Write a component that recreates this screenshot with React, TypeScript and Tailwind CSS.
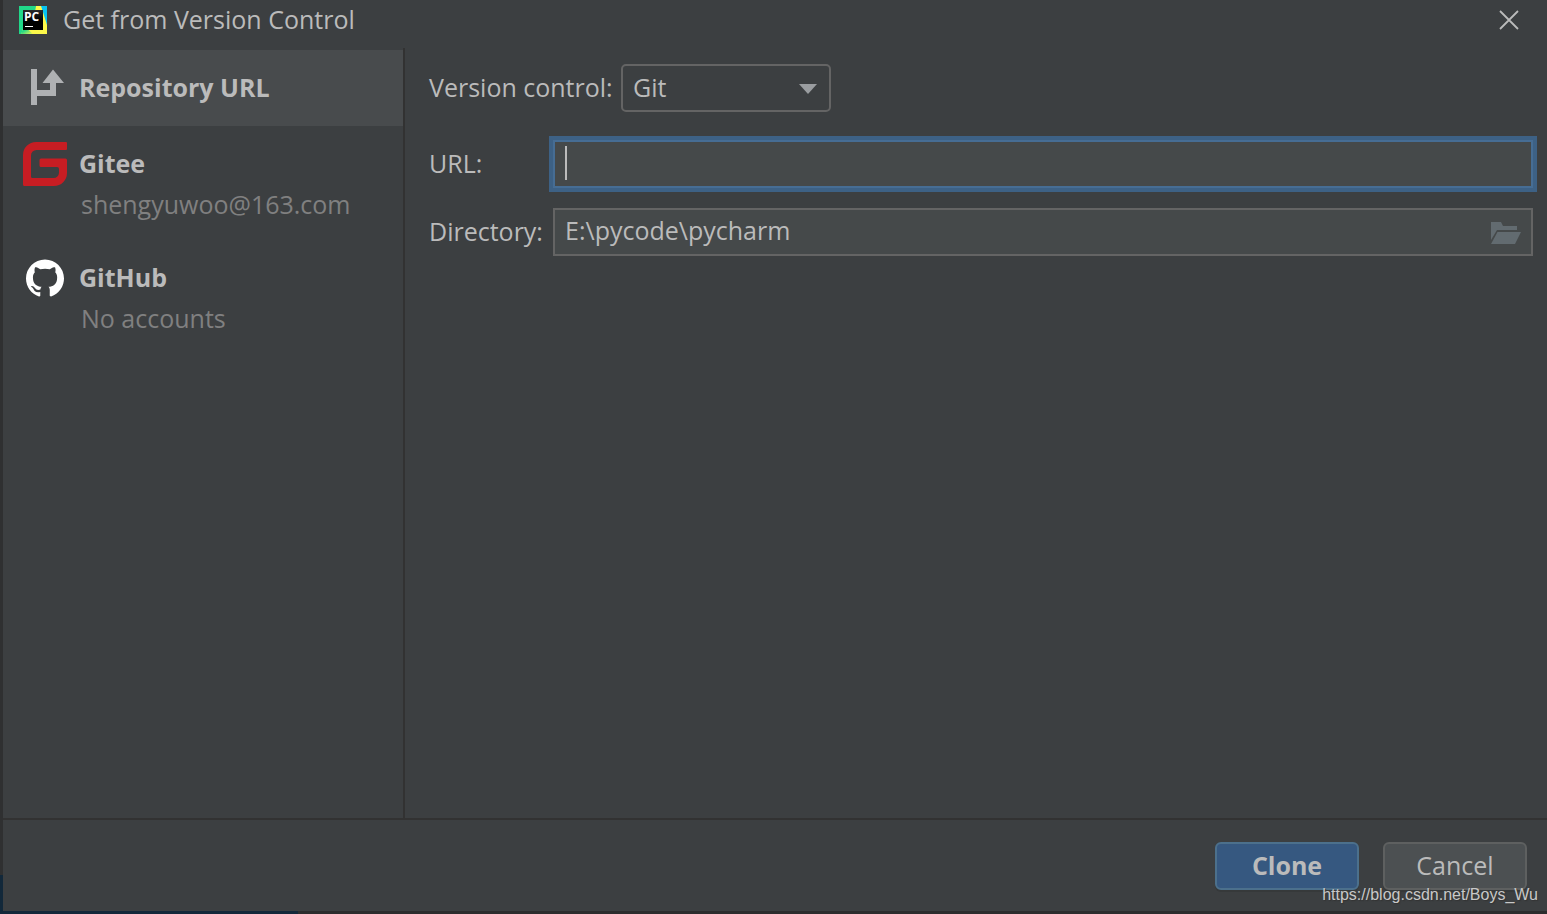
import type { ReactNode } from 'react';

function PyCharmLogo() {
  return (
    <svg viewBox="0 0 28 28" className="size-7 shrink-0" aria-hidden="true">
      <defs>
        <linearGradient id="pc-green" x1="0" y1="0" x2="1" y2="1">
          <stop offset="0.4" stopColor="#21d789" />
          <stop offset="1" stopColor="#fcf84a" />
        </linearGradient>
        <linearGradient id="pc-black" x1="0" y1="0" x2="0" y2="1">
          <stop offset="0" stopColor="#2b2b2b" />
          <stop offset="0.5" stopColor="#000" />
        </linearGradient>
      </defs>
      <rect width="28" height="28" fill="#21d789" />
      <path d="M20 0h8v22l-8-14z" fill="#07c3f2" />
      <path d="M17 0h5l2 6 4 13v9H2l2-8 12-14z" fill="#fcf84a" />
      <path d="M0 0h17L5 14v6L2 28H0z" fill="#21d789" />
      <path d="M2 28l3-8 9 8z" fill="url(#pc-green)" />
      <rect x="4" y="4" width="20" height="20" fill="url(#pc-black)" />
      <text x="5" y="15" fill="#fff" fontFamily="Open Sans, sans-serif" fontWeight="700" fontSize="12">
        PC
      </text>
      <rect x="6" y="20" width="8" height="1" fill="#fff" />
    </svg>
  );
}

function BranchIcon() {
  return (
    <svg viewBox="0 0 44 44" className="size-11" fill="#afb1b3" aria-hidden="true">
      <path d="M8 3h6v36H8z" />
      <path d="M14 24h13v-7h-7.500L30 3.500 41 17h-8v13H14z" />
    </svg>
  );
}

function GiteeIcon() {
  return (
    <svg viewBox="0 0 44 44" className="size-11" fill="#c71d23" aria-hidden="true">
      <path d="M13 0H43a1 1 0 0 1 1 1V7a1 1 0 0 1-1 1H13.500A5.500 5.500 0 0 0 8 13.500V34.500A1.500 1.500 0 0 0 9.500 36H30.500A5.500 5.500 0 0 0 36 30.500V27a2 2 0 0 0-2-2H18a1.500 1.500 0 0 1-1.500-1.500V18A1.500 1.500 0 0 1 18 16.500H42.500A1.500 1.500 0 0 1 44 18V31A13 13 0 0 1 31 44H1.500A1.500 1.500 0 0 1 0 42.500V13A13 13 0 0 1 13 0z" />
    </svg>
  );
}

function GitHubIcon() {
  return (
    <svg viewBox="0 0 16 16" className="size-[38px]" fill="#fff" aria-hidden="true">
      <path d="M8 .2c-4.420 0-8 3.580-8 8 0 3.540 2.290 6.530 5.470 7.590.4.070.55-.17.55-.38 0-.19-.01-.82-.01-1.490-2.010.37-2.530-.49-2.690-.94-.09-.23-.48-.94-.82-1.130-.28-.15-.68-.52-.01-.53.63-.01 1.080.58 1.230.82.72 1.210 1.870.87 2.330.66.07-.52.28-.87.51-1.070-1.780-.2-3.640-.89-3.640-3.950 0-.87.31-1.590.82-2.150-.08-.2-.36-1.020.08-2.120 0 0 .67-.21 2.200.82.64-.18 1.320-.27 2-.27s1.360.09 2 .27c1.530-1.040 2.200-.82 2.200-.82.44 1.100.16 1.920.08 2.120.51.56.82 1.270.82 2.150 0 3.070-1.870 3.750-3.650 3.950.29.25.54.73.54 1.480 0 1.070-.01 1.930-.01 2.200 0 .21.15.46.55.38A8.010 8.010 0 0 0 16 8.200c0-4.420-3.580-8-8-8z" />
    </svg>
  );
}

function FolderIcon() {
  return (
    <svg viewBox="0 0 30 22" className="h-[22px] w-[30px]" fill="#626b70" aria-hidden="true">
      <path d="M0 0h10l2 4h14v4H6L0 18z" />
      <path d="M6.500 10H30l-6 12H0z" />
    </svg>
  );
}

function SourceItem({
  icon,
  name,
  account,
  selected = false,
}: {
  icon: ReactNode;
  name: string;
  account?: string;
  selected?: boolean;
}) {
  return (
    <button
      type="button"
      aria-pressed={selected}
      className={`block w-full pt-4 text-left ${selected ? 'bg-[#484b4d] pb-4' : 'pb-[18px]'}`}
    >
      <span className="flex h-11 items-center gap-3 pl-5">
        <span className="flex w-11 justify-center">{icon}</span>
        <span className="font-bold">{name}</span>
      </span>
      {account && <span className="block pl-[78px] leading-9 text-[#808080]">{account}</span>}
    </button>
  );
}

export default function App() {
  return (
    <div className="flex min-h-screen flex-col bg-[#3c3f41] font-['Open_Sans','Noto_Sans',sans-serif] text-[25px] text-[#bbbbbb]">
      <div className="flex grow">
        <div className="flex w-[3px] shrink-0 flex-col bg-[#2f3031]">
          <div className="mt-auto h-9 bg-[#12283a]" />
        </div>
        <div className="flex min-w-0 grow flex-col">
          <header className="flex h-12 shrink-0 items-center pr-6 pb-2 pl-4">
            <PyCharmLogo />
            <h1 className="pl-4">Get from Version Control</h1>
            <button type="button" aria-label="Close" className="ml-auto">
              <svg viewBox="0 0 28 28" className="size-7" stroke="#bbbbbb" strokeWidth="1.800" aria-hidden="true">
                <path d="M5 5l18 18M23 5L5 23" />
              </svg>
            </button>
          </header>

          <main className="flex grow">
            <nav className="w-[402px] shrink-0 border-r-2 border-[#323232] pt-0.5" aria-label="Repository sources">
              <SourceItem icon={<BranchIcon />} name="Repository URL" selected />
              <SourceItem icon={<GiteeIcon />} name="Gitee" account="shengyuwoo@163.com" />
              <SourceItem icon={<GitHubIcon />} name="GitHub" account="No accounts" />
            </nav>

            <form className="min-w-0 grow pt-4 pr-[14px] pl-6">
              <div className="flex h-12 items-center">
                <label htmlFor="vcs" className="w-48">
                  Version control:
                </label>
                <div className="relative">
                  <select
                    id="vcs"
                    className="h-12 w-[210px] appearance-none rounded-[5px] border-2 border-[#646464] bg-transparent px-2.5"
                  >
                    <option>Git</option>
                  </select>
                  <svg
                    viewBox="0 0 18 10"
                    className="pointer-events-none absolute top-5 right-[14px] h-2.5 w-[18px]"
                    fill="#9a9da0"
                    aria-hidden="true"
                  >
                    <path d="M0 0h18l-9 10z" />
                  </svg>
                </div>
              </div>

              <div className="mt-7 flex h-12 items-center">
                <label htmlFor="url" className="w-[124px] shrink-0">
                  URL:
                </label>
                <div className="relative grow">
                  <input
                    id="url"
                    type="text"
                    className="block h-12 w-full border-2 border-[#466d94] bg-[#45494a] px-2.5 caret-transparent ring-4 ring-[#3d6185] outline-none"
                  />
                  <span className="pointer-events-none absolute top-1.5 left-3 h-[34px] w-0.5 bg-[#bbbbbb]" />
                </div>
              </div>

              <div className="mt-5 flex h-12 items-center">
                <label htmlFor="directory" className="w-[124px] shrink-0">
                  Directory:
                </label>
                <div className="flex h-12 grow items-center border-2 border-[#646464] bg-[#45494a] pr-2.5 pl-2.5">
                  <input
                    id="directory"
                    type="text"
                    defaultValue="E:\pycode\pycharm"
                    className="min-w-0 grow bg-transparent pb-0.5 outline-none"
                  />
                  <button type="button" aria-label="Browse" className="pt-0.5">
                    <FolderIcon />
                  </button>
                </div>
              </div>
            </form>
          </main>

          <footer className="relative flex h-[93px] shrink-0 justify-end gap-6 border-t-2 border-[#323232] pt-[22px] pr-5">
            <button
              type="button"
              className="h-12 w-36 rounded-md border-2 border-[#4c708c] bg-[#365880] font-bold shadow-[0_2px_0_#36393a]"
            >
              Clone
            </button>
            <button
              type="button"
              className="h-12 w-36 rounded-md border-2 border-[#5e6060] bg-[#4c5052] shadow-[0_2px_0_#36393a]"
            >
              Cancel
            </button>
            <p className="absolute right-[9px] bottom-1 font-['Liberation_Sans',sans-serif] text-base text-[#c8c8c8] [text-shadow:1px_1px_1px_#333]">
              https://blog.csdn.net/Boys_Wu
            </p>
          </footer>
        </div>
      </div>
      <div className="flex h-[3px] shrink-0 bg-[#2d2d2e]">
        <div className="w-[298px] bg-[#14283a]" />
      </div>
    </div>
  );
}
